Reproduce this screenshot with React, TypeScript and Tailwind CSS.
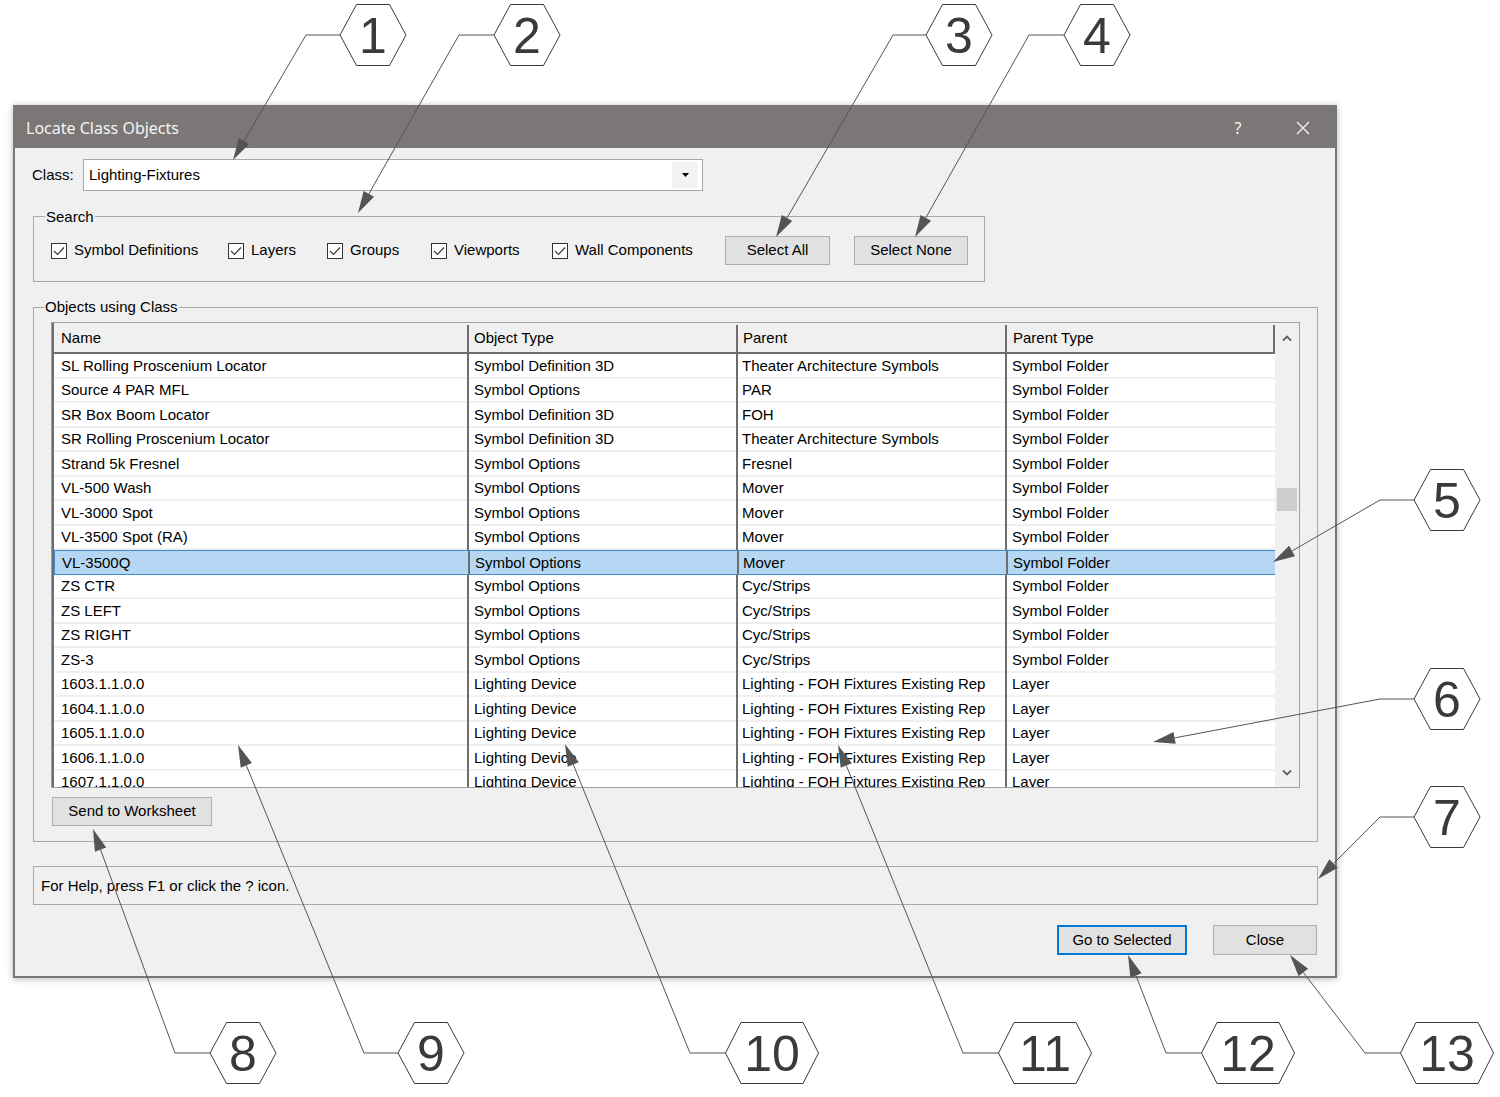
import React from "react";

type Row = [string, string, string, string];

const rows: Row[] = [
  ["SL Rolling Proscenium Locator", "Symbol Definition 3D", "Theater Architecture Symbols", "Symbol Folder"],
  ["Source 4 PAR MFL", "Symbol Options", "PAR", "Symbol Folder"],
  ["SR Box Boom Locator", "Symbol Definition 3D", "FOH", "Symbol Folder"],
  ["SR Rolling Proscenium Locator", "Symbol Definition 3D", "Theater Architecture Symbols", "Symbol Folder"],
  ["Strand 5k Fresnel", "Symbol Options", "Fresnel", "Symbol Folder"],
  ["VL-500 Wash", "Symbol Options", "Mover", "Symbol Folder"],
  ["VL-3000 Spot", "Symbol Options", "Mover", "Symbol Folder"],
  ["VL-3500 Spot (RA)", "Symbol Options", "Mover", "Symbol Folder"],
  ["VL-3500Q", "Symbol Options", "Mover", "Symbol Folder"],
  ["ZS CTR", "Symbol Options", "Cyc/Strips", "Symbol Folder"],
  ["ZS LEFT", "Symbol Options", "Cyc/Strips", "Symbol Folder"],
  ["ZS RIGHT", "Symbol Options", "Cyc/Strips", "Symbol Folder"],
  ["ZS-3", "Symbol Options", "Cyc/Strips", "Symbol Folder"],
  ["1603.1.1.0.0", "Lighting Device", "Lighting - FOH Fixtures Existing Rep", "Layer"],
  ["1604.1.1.0.0", "Lighting Device", "Lighting - FOH Fixtures Existing Rep", "Layer"],
  ["1605.1.1.0.0", "Lighting Device", "Lighting - FOH Fixtures Existing Rep", "Layer"],
  ["1606.1.1.0.0", "Lighting Device", "Lighting - FOH Fixtures Existing Rep", "Layer"],
  ["1607.1.1.0.0", "Lighting Device", "Lighting - FOH Fixtures Existing Rep", "Layer"],
];

const SELECTED = 8;

// callout bubbles: hex centre, start of the leader's horizontal run, arrow tip
const callouts = [
  { n: "1", cx: 373, cy: 35, sx: 306, tx: 233, ty: 160 },
  { n: "2", cx: 527, cy: 35, sx: 459, tx: 358, ty: 213 },
  { n: "3", cx: 959, cy: 35, sx: 893, tx: 776, ty: 237 },
  { n: "4", cx: 1097, cy: 35, sx: 1029, tx: 915, ty: 237 },
  { n: "5", cx: 1447, cy: 500, sx: 1380, tx: 1273, ty: 562 },
  { n: "6", cx: 1447, cy: 699, sx: 1380, tx: 1153, ty: 742 },
  { n: "7", cx: 1447, cy: 817, sx: 1380, tx: 1318, ty: 879 },
  { n: "8", cx: 243, cy: 1053, sx: 175, tx: 93, ty: 829 },
  { n: "9", cx: 431, cy: 1053, sx: 364, tx: 238, ty: 745 },
  { n: "10", cx: 772, cy: 1053, sx: 690, tx: 565, ty: 744 },
  { n: "11", cx: 1045, cy: 1053, sx: 963, tx: 838, ty: 745 },
  { n: "12", cx: 1248, cy: 1053, sx: 1166, tx: 1128, ty: 955 },
  { n: "13", cx: 1447, cy: 1053, sx: 1365, tx: 1290, ty: 955 },
];

function Callout({ n, cx, cy, sx, tx, ty }: { n: string; cx: number; cy: number; sx: number; tx: number; ty: number }) {
  const wide = n.length > 1;
  const hw = wide ? 46.5 : 33;
  const tw = wide ? 31 : 16.5;
  const hh = 30.5;
  const hex = [
    [cx - hw, cy],
    [cx - tw, cy - hh],
    [cx + tw, cy - hh],
    [cx + hw, cy],
    [cx + tw, cy + hh],
    [cx - tw, cy + hh],
  ]
    .map((p) => p.join(","))
    .join(" ");
  const dx = tx - sx;
  const dy = ty - cy;
  const len = Math.hypot(dx, dy);
  const ux = dx / len;
  const uy = dy / len;
  const L = 22;
  const W = 6;
  const bx = tx - ux * L;
  const by = ty - uy * L;
  const head = `${tx},${ty} ${bx - uy * W},${by + ux * W} ${bx + uy * W},${by - ux * W}`;
  return (
    <g>
      <polyline points={`${cx - hw},${cy} ${sx},${cy} ${bx},${by}`} fill="none" stroke="#555555" strokeWidth="1" />
      <polygon points={head} fill="#545454" />
      <polygon points={hex} fill="#ffffff" stroke="#3a3a3a" strokeWidth="1" />
      <text
        x={cx}
        y={cy + 18}
        textAnchor="middle"
        fontSize="50"
        fill="#3a3a3a"
        fontFamily="'Liberation Sans', Arial, sans-serif"
      >
        {n}
      </text>
    </g>
  );
}

function Check({ label, className }: { label: string; className: string }) {
  return (
    <div className={`flex items-center ${className}`}>
      <span className="flex h-[16px] w-[16px] items-center justify-center border border-[#333333] bg-white">
        <svg width="12" height="10" viewBox="0 0 12 10">
          <path d="M1 5 L4.5 8.5 L11 1.5" fill="none" stroke="#3c3c3c" strokeWidth="1.2" />
        </svg>
      </span>
      <span className="ml-[7px]">{label}</span>
    </div>
  );
}

function Chevron({ down }: { down?: boolean }) {
  return (
    <svg width="10" height="7" viewBox="0 0 10 7">
      <path d={down ? "M1 1.5 L5 5.5 L9 1.5" : "M1 5.5 L5 1.5 L9 5.5"} fill="none" stroke="#606060" strokeWidth="1.8" />
    </svg>
  );
}

function Table() {
  return (
    <div className="flex h-[466px] w-[1249px] border border-[#a0a0a0] bg-white">
      <div className="flex w-[1223px] flex-col border-l-2 border-[#6e6e6e]">
        <div className="flex h-[31px] shrink-0 border-b-2 border-[#6e6e6e] bg-[#f0f0f0] pt-[2px]">
          <div className="flex w-[415px] items-center border-r-2 border-[#6e6e6e] pl-[7px]">Name</div>
          <div className="flex w-[269px] items-center border-r-2 border-[#6e6e6e] pl-[5px]">Object Type</div>
          <div className="flex w-[269px] items-center border-r-2 border-[#6e6e6e] pl-[5px]">Parent</div>
          <div className="flex w-[268px] items-center border-r-2 border-[#6e6e6e] pl-[6px]">Parent Type</div>
        </div>
        <div className="flex-1 overflow-hidden">
          {rows.map((r, i) => {
            const sel = i === SELECTED;
            const inner = sel
              ? "flex h-full items-center whitespace-nowrap pt-[1px]"
              : "flex h-full items-center whitespace-nowrap border-b-2 border-[#f0f0f0] pt-[1px]";
            return (
              <div
                key={i}
                className={
                  sel
                    ? "flex h-[24.5px] border-y border-l border-[#3f8bcf] bg-[#b5d7f3]"
                    : "flex h-[24.5px]"
                }
              >
                <div className="w-[415px] border-r-2 border-[#6e6e6e]">
                  <div className={`${inner} pl-[7px]`}>{r[0]}</div>
                </div>
                <div className="w-[269px] border-r-2 border-[#6e6e6e]">
                  <div className={`${inner} pl-[5px]`}>{r[1]}</div>
                </div>
                <div className="w-[269px] border-r-2 border-[#6e6e6e]">
                  <div className={`${inner} pl-[4px]`}>{r[2]}</div>
                </div>
                <div className="flex-1">
                  <div className={`${inner} pl-[5px]`}>{r[3]}</div>
                </div>
              </div>
            );
          })}
        </div>
      </div>
      <div className="flex w-[24px] flex-col bg-[#f0f0f0]">
        <div className="flex h-[30px] items-center justify-center">
          <Chevron />
        </div>
        <div className="flex-1 pl-[2px]">
          <div className="mt-[135px] h-[23px] w-[20px] bg-[#cdcdcd]" />
        </div>
        <div className="flex h-[30px] items-center justify-center">
          <Chevron down />
        </div>
      </div>
    </div>
  );
}

export default function App() {
  return (
    <div className="relative h-[1097px] w-[1500px] overflow-hidden bg-white font-['Liberation_Sans',Arial,sans-serif] text-[15px] text-black">
      <div className="pl-[13px] pt-[105px]">
        <div className="flex h-[873px] w-[1324px] flex-col border-2 border-[#7b7776] bg-[#f0f0f0] shadow-[0_1px_7px_rgba(0,0,0,0.28)]">
          {/* title bar */}
          <div className="flex h-[41px] shrink-0 items-center bg-[#7b7776] pl-[11px] pr-[22px] text-[#f4f4f4]">
            <span className="font-['Noto_Sans',sans-serif] text-[16px]">Locate Class Objects</span>
            <span className="ml-auto w-[20px] text-center font-['Noto_Sans',sans-serif] text-[16px]">?</span>
            <span className="ml-[45px] flex w-[20px] justify-center">
              <svg width="14" height="14" viewBox="0 0 14 14">
                <path d="M1 1 L13 13 M13 1 L1 13" stroke="#f4f4f4" strokeWidth="1.3" />
              </svg>
            </span>
          </div>

          <div className="flex flex-1 flex-col pl-[18px] pr-[17px]">
            {/* class picker */}
            <div className="mt-[11px] flex h-[32px] items-center">
              <span className="ml-[-1px] w-[51px]">Class:</span>
              <div className="flex h-[32px] w-[620px] items-center border border-[#a9a9a9] bg-white p-[2px] pr-[4px]">
                <span className="flex-1 pl-[3px]">Lighting-Fixtures</span>
                <span className="flex h-full w-[26px] items-center justify-center bg-[#f3f3f3]">
                  <svg width="7" height="4" viewBox="0 0 7 4">
                    <polygon points="0,0 7,0 3.5,4" fill="#000000" />
                  </svg>
                </span>
              </div>
            </div>

            {/* search options */}
            <fieldset className="mt-[15px] w-[952px] border border-[#a9a9a9]">
              <legend className="ml-[11px] px-[1px] pt-[2px] leading-[18px]">Search</legend>
              <div className="flex h-[55px] items-start pl-[17px] pt-[10px]">
                <div className="flex h-[29px] items-center">
                  <Check label="Symbol Definitions" className="w-[177px]" />
                  <Check label="Layers" className="w-[99px]" />
                  <Check label="Groups" className="w-[104px]" />
                  <Check label="Viewports" className="w-[121px]" />
                  <Check label="Wall Components" className="w-[173px]" />
                  <button className="flex h-[29px] w-[105px] items-center justify-center border border-[#adadad] bg-[#e1e1e1]">
                    Select All
                  </button>
                  <button className="ml-[24px] flex h-[29px] w-[114px] items-center justify-center border border-[#adadad] bg-[#e1e1e1]">
                    Select None
                  </button>
                </div>
              </div>
            </fieldset>

            {/* objects list */}
            <fieldset className="mt-[16px] border border-[#a9a9a9]">
              <legend className="ml-[10px] px-[1px] leading-[18px]">Objects using Class</legend>
              <div className="px-[17px] pb-[15px] pt-[6px]">
                <Table />
                <button className="ml-[1px] mt-[9px] flex h-[29px] w-[160px] items-center justify-center border border-[#adadad] bg-[#e1e1e1]">
                  Send to Worksheet
                </button>
              </div>
            </fieldset>

            {/* help line */}
            <div className="mt-[24px] flex h-[39px] items-center border border-[#a9a9a9] pl-[7px] pt-[1px]">
              For Help, press F1 or click the ? icon.
            </div>

            <div className="mt-[20px] flex justify-end gap-[26px] pr-[1px]">
              <button className="flex h-[30px] w-[130px] items-center justify-center border-2 border-[#0078d7] bg-[#e1e1e1]">
                Go to Selected
              </button>
              <button className="flex h-[30px] w-[104px] items-center justify-center border border-[#adadad] bg-[#e1e1e1]">
                Close
              </button>
            </div>
          </div>
        </div>
      </div>

      <svg className="pointer-events-none absolute left-0 top-0" width="1500" height="1097" viewBox="0 0 1500 1097">
        {callouts.map((c) => (
          <Callout key={c.n} {...c} />
        ))}
      </svg>
    </div>
  );
}
